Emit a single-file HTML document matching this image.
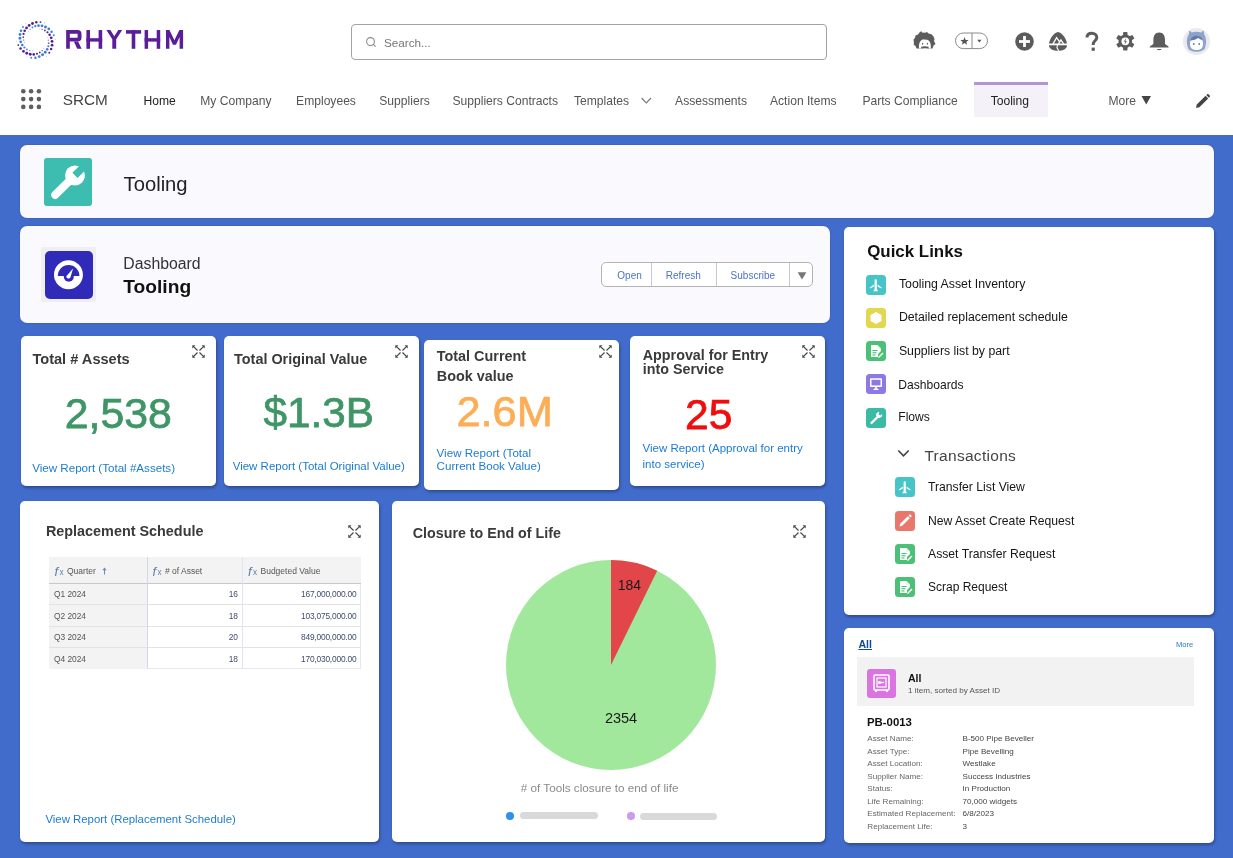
<!DOCTYPE html>
<html><head><meta charset="utf-8"><title>Tooling</title>
<style>
html,body{margin:0;padding:0;}
body{width:1233px;height:858px;overflow:hidden;position:relative;background:#fff;font-family:"Liberation Sans", sans-serif;-webkit-font-smoothing:antialiased;will-change:transform;}
.t{position:absolute;line-height:1;white-space:nowrap;}
.r{position:absolute;box-sizing:border-box;}
svg.r{overflow:visible;}
</style></head><body>
<div class="r" style="left:0px;top:135px;width:1233px;height:723px;background:#416ccc;border-radius:0px;"></div>
<svg class="r" style="left:0px;top:0px;" width="1" height="1" viewBox="0 0 1 1"><circle cx="44.72" cy="22.89" r="0.35" fill="#53209a"/><circle cx="40.46" cy="22.12" r="0.93" fill="#53209a"/><circle cx="36.31" cy="22.34" r="1.24" fill="#53209a"/><circle cx="32.49" cy="23.48" r="1.40" fill="#53209a"/><circle cx="29.19" cy="25.39" r="1.45" fill="#53209a"/><circle cx="26.55" cy="27.90" r="1.40" fill="#53209a"/><circle cx="24.67" cy="30.82" r="1.28" fill="#53209a"/><circle cx="23.59" cy="33.95" r="1.09" fill="#53209a"/><circle cx="23.29" cy="37.07" r="0.86" fill="#53209a"/><circle cx="23.73" cy="40.00" r="0.61" fill="#53209a"/><circle cx="24.79" cy="42.59" r="0.35" fill="#53209a"/><circle cx="16.83" cy="41.00" r="0.35" fill="#53209a"/><circle cx="18.28" cy="45.08" r="0.93" fill="#53209a"/><circle cx="20.55" cy="48.56" r="1.24" fill="#53209a"/><circle cx="23.45" cy="51.30" r="1.40" fill="#53209a"/><circle cx="26.75" cy="53.20" r="1.45" fill="#53209a"/><circle cx="30.25" cy="54.23" r="1.40" fill="#53209a"/><circle cx="33.72" cy="54.40" r="1.28" fill="#53209a"/><circle cx="36.96" cy="53.78" r="1.09" fill="#53209a"/><circle cx="39.81" cy="52.47" r="0.86" fill="#53209a"/><circle cx="42.14" cy="50.63" r="0.61" fill="#53209a"/><circle cx="43.84" cy="48.41" r="0.35" fill="#53209a"/><circle cx="46.46" cy="56.10" r="0.35" fill="#53209a"/><circle cx="49.26" cy="52.80" r="0.93" fill="#53209a"/><circle cx="51.14" cy="49.10" r="1.24" fill="#53209a"/><circle cx="52.06" cy="45.22" r="1.40" fill="#53209a"/><circle cx="52.06" cy="41.40" r="1.45" fill="#53209a"/><circle cx="51.20" cy="37.86" r="1.40" fill="#53209a"/><circle cx="49.61" cy="34.77" r="1.28" fill="#53209a"/><circle cx="47.45" cy="32.28" r="1.09" fill="#53209a"/><circle cx="44.89" cy="30.46" r="0.86" fill="#53209a"/><circle cx="42.14" cy="29.37" r="0.61" fill="#53209a"/><circle cx="39.36" cy="29.00" r="0.35" fill="#53209a"/><circle cx="25.83" cy="23.72" r="0.35" fill="#3c7de0"/><circle cx="22.97" cy="26.97" r="0.93" fill="#3c7de0"/><circle cx="21.02" cy="30.64" r="1.24" fill="#3c7de0"/><circle cx="20.03" cy="34.50" r="1.40" fill="#3c7de0"/><circle cx="19.97" cy="38.32" r="1.45" fill="#3c7de0"/><circle cx="20.76" cy="41.87" r="1.40" fill="#3c7de0"/><circle cx="22.30" cy="44.99" r="1.28" fill="#3c7de0"/><circle cx="24.42" cy="47.52" r="1.09" fill="#3c7de0"/><circle cx="26.94" cy="49.38" r="0.86" fill="#3c7de0"/><circle cx="29.68" cy="50.52" r="0.61" fill="#3c7de0"/><circle cx="32.45" cy="50.94" r="0.35" fill="#3c7de0"/><circle cx="26.99" cy="56.95" r="0.35" fill="#3c7de0"/><circle cx="31.23" cy="57.80" r="0.93" fill="#3c7de0"/><circle cx="35.38" cy="57.65" r="1.24" fill="#3c7de0"/><circle cx="39.22" cy="56.58" r="1.40" fill="#3c7de0"/><circle cx="42.56" cy="54.73" r="1.45" fill="#3c7de0"/><circle cx="45.24" cy="52.26" r="1.40" fill="#3c7de0"/><circle cx="47.17" cy="49.37" r="1.28" fill="#3c7de0"/><circle cx="48.30" cy="46.27" r="1.09" fill="#3c7de0"/><circle cx="48.65" cy="43.15" r="0.86" fill="#3c7de0"/><circle cx="48.27" cy="40.21" r="0.61" fill="#3c7de0"/><circle cx="47.25" cy="37.61" r="0.35" fill="#3c7de0"/><circle cx="55.19" cy="39.33" r="0.35" fill="#3c7de0"/><circle cx="53.80" cy="35.23" r="0.93" fill="#3c7de0"/><circle cx="51.59" cy="31.71" r="1.24" fill="#3c7de0"/><circle cx="48.75" cy="28.92" r="1.40" fill="#3c7de0"/><circle cx="45.48" cy="26.96" r="1.45" fill="#3c7de0"/><circle cx="42.00" cy="25.87" r="1.40" fill="#3c7de0"/><circle cx="38.53" cy="25.64" r="1.28" fill="#3c7de0"/><circle cx="35.28" cy="26.21" r="1.09" fill="#3c7de0"/><circle cx="32.41" cy="27.47" r="0.86" fill="#3c7de0"/><circle cx="30.05" cy="29.27" r="0.61" fill="#3c7de0"/><circle cx="28.30" cy="31.45" r="0.35" fill="#3c7de0"/></svg>
<svg class="r" style="left:0px;top:0px;" width="1" height="1" viewBox="0 0 1 1"><path d="M66.15 48.8 V30.05 H77.5 Q81.5 30.05 81.5 34 V37.7 Q81.5 41.5 77.5 41.5 H69.8 V37.7 H77.6 V33.7 H69.8 V48.8 Z" fill="#5b1e98"/><path d="M73.9 41.5 L78.1 41.5 L81.6 48.8 L77.2 48.8 Z" fill="#5b1e98"/><rect x="86.4" y="30.05" width="3.6" height="18.75" fill="#5b1e98"/><rect x="98.6" y="30.05" width="3.6" height="18.75" fill="#5b1e98"/><rect x="86.4" y="38.2" width="15.8" height="3.4" fill="#5b1e98"/><path d="M106.4 30.05 L110.4 30.05 L114.25 36.2 L118.3 30.05 L122.2 30.05 L116.2 39.3 L116.2 48.8 L112.3 48.8 L112.3 39.3 Z" fill="#5b1e98"/><rect x="126" y="30.1" width="15.1" height="3.6" fill="#5b1e98"/><rect x="131.7" y="30.1" width="3.6" height="18.7" fill="#5b1e98"/><rect x="144.6" y="30.05" width="3.5" height="18.75" fill="#5b1e98"/><rect x="156.7" y="30.05" width="3.5" height="18.75" fill="#5b1e98"/><rect x="144.6" y="38.2" width="15.6" height="3.4" fill="#5b1e98"/><path d="M166 48.8 V30.05 H169.5 L174.4 40.2 L179.4 30.05 H183.1 V48.8 H179.6 V37 L176 44.7 H172.9 L169.4 37 V48.8 Z" fill="#5b1e98"/></svg>
<div class="r" style="left:351px;top:24px;width:476px;height:35.5px;border:1px solid #a3a3a3;border-radius:4px;background:#fff"></div>
<svg class="r" style="left:365px;top:36px;" width="12" height="12" viewBox="0 0 12 12"><circle cx="5.5" cy="5.5" r="3.9" fill="none" stroke="#888" stroke-width="1.05"/><line x1="8.3" y1="8.3" x2="10.6" y2="10.6" stroke="#888" stroke-width="1.1"/></svg>
<div class="t" style="left:384.0px;top:36.7px;font-size:11.7px;color:#777;">Search...</div>
<svg class="r" style="left:908px;top:26px;" width="34" height="28" viewBox="0 0 34 28"><path d="M6 17.5 L5.5 13.5 L7 12 L7.5 9.5 L10 8.5 L11.5 6.5 L13.3 5 L14 6.5 L17 6.8 L19 6 L20.5 7.5 L23.5 8.3 L25.5 10.5 L26.5 13 L26 15 L27.5 18 L25.5 19.5 L24.5 22.5 L8.5 22.5 L7.5 20 L5.5 18.5 Z" fill="#5c5c5c"/><path d="M11 22.6 C10.5 16 13 13.3 16.3 13.3 L17 14 L17.8 13.4 C21.5 13.8 23.3 16.5 22.8 22.6 Z" fill="#fff"/><ellipse cx="14.6" cy="17.8" rx="0.6" ry="0.95" fill="#5c5c5c"/><ellipse cx="19.4" cy="17.8" rx="0.6" ry="0.95" fill="#5c5c5c"/><path d="M13 22.6 L13.3 20.7 C15 20 18.5 20 20.5 20.7 L20.8 22.6 C18 21.8 15.8 21.8 13 22.6 Z" fill="#5c5c5c"/></svg>
<svg class="r" style="left:955px;top:32px;" width="34" height="18" viewBox="0 0 34 18"><rect x="0.5" y="1" width="32" height="15.6" rx="7.8" fill="#fff" stroke="#8a8a8a" stroke-width="1"/><line x1="17" y1="1" x2="17" y2="16.6" stroke="#8a8a8a" stroke-width="1"/><path d="M9.5 5 L10.6 7.9 L13.6 8 L11.3 9.9 L12.1 12.8 L9.5 11.1 L6.9 12.8 L7.7 9.9 L5.4 8 L8.4 7.9 Z" fill="#555"/><path d="M22.3 7.8 L26.5 7.8 L24.4 10.5 Z" fill="#555"/></svg>
<svg class="r" style="left:1015px;top:32px;" width="19" height="19" viewBox="0 0 19 19"><circle cx="9.5" cy="9.5" r="9.3" fill="#5c5c5c"/><rect x="8.1" y="4" width="2.8" height="11" fill="#fff"/><rect x="4" y="8.1" width="11" height="2.8" fill="#fff"/></svg>
<svg class="r" style="left:1044px;top:28px;" width="28" height="26" viewBox="0 0 28 26"><path d="M5 15.6 C6 10 10 4.5 14 4 C18 4.5 22 10 23 15.6 Z" fill="#5c5c5c"/><path d="M9 15.8 L12.6 9.6 L15.6 13.8 M14.5 15.8 L16.9 11.9 L19.6 15.8" fill="none" stroke="#fff" stroke-width="1.3"/><path d="M5 17.3 L23 17.3 C23 21 19 22.8 14 22.8 C9 22.8 5 21 5 17.3 Z" fill="#5c5c5c"/><path d="M13.5 17 L12.9 19.6 L14.8 23" fill="none" stroke="#fff" stroke-width="1.1"/></svg>
<svg class="r" style="left:1085px;top:32px;" width="14" height="20" viewBox="0 0 14 20"><path d="M2 5.5 C2 2.5 4.3 1.2 6.8 1.2 C9.6 1.2 11.8 3 11.8 5.5 C11.8 8.5 8.2 9 8.2 12 L8.2 13" fill="none" stroke="#5c5c5c" stroke-width="3" stroke-linecap="butt"/><rect x="6.6" y="15.6" width="3.2" height="3.2" fill="#5c5c5c"/></svg>
<svg class="r" style="left:1116px;top:32px;" width="19" height="19" viewBox="0 0 19 19"><rect x="7.1" y="0" width="4.4" height="5" rx="0.8" fill="#5c5c5c" transform="rotate(0 9.3 9.3)"/><rect x="7.1" y="0" width="4.4" height="5" rx="0.8" fill="#5c5c5c" transform="rotate(60 9.3 9.3)"/><rect x="7.1" y="0" width="4.4" height="5" rx="0.8" fill="#5c5c5c" transform="rotate(120 9.3 9.3)"/><rect x="7.1" y="0" width="4.4" height="5" rx="0.8" fill="#5c5c5c" transform="rotate(180 9.3 9.3)"/><rect x="7.1" y="0" width="4.4" height="5" rx="0.8" fill="#5c5c5c" transform="rotate(240 9.3 9.3)"/><rect x="7.1" y="0" width="4.4" height="5" rx="0.8" fill="#5c5c5c" transform="rotate(300 9.3 9.3)"/><circle cx="9.3" cy="9.3" r="6.8" fill="#5c5c5c"/><circle cx="9.3" cy="9.3" r="3.9" fill="#fff"/><path d="M10 6.3 L7.8 9.6 L9.3 9.6 L8.6 12.4 L10.9 9 L9.4 9 Z" fill="#5c5c5c"/></svg>
<svg class="r" style="left:1149px;top:32px;" width="21" height="20" viewBox="0 0 21 20"><path d="M10.2 0.5 C14.5 0.5 16 4 16 8 L16 11.5 C16 12.5 18.5 13.5 19.5 14.5 L19.5 15.5 L0.8 15.5 L0.8 14.5 C2 13.5 4.4 12.5 4.4 11.5 L4.4 8 C4.4 4 6 0.5 10.2 0.5 Z" fill="#5c5c5c"/><path d="M7.8 17 L12.6 17 C12 18.6 8.4 18.6 7.8 17 Z" fill="#5c5c5c"/></svg>
<svg class="r" style="left:1183px;top:28px;" width="27" height="27" viewBox="0 0 27 27"><circle cx="13.5" cy="13.5" r="13.5" fill="#e9e9ee"/><path d="M5 20 C3 14 4 9 6 6 L6 3.5 C6.5 2.5 8 3 8.5 4.5 C11.5 3.5 15.5 3.5 18.5 4.5 C19 3 20.5 2.5 21 3.5 L21 6 C23 9 24 14 22 20 C20 25 7 25 5 20 Z" fill="#8ea3c9"/><path d="M7 16 C7 11 9 8.5 13.5 8.5 C18 8.5 20 11 20 16 C20 20.5 17 22 13.5 22 C10 22 7 20.5 7 16 Z" fill="#fff"/><path d="M7 12.5 C8 9 11 7.5 14 7.8 C17 8 19.5 10 20 12.5 C18 11.5 16 11 15 9.8 C14 11.5 10 12.5 7 12.5 Z" fill="#5f7bb0"/><circle cx="10.8" cy="16" r="0.9" fill="#5f7bb0"/><circle cx="16.2" cy="16" r="0.9" fill="#5f7bb0"/></svg>
<svg class="r" style="left:20.5px;top:89px;" width="21" height="21" viewBox="0 0 21 21"><circle cx="2.3" cy="2.3" r="2.3" fill="#5e5e5e"/><circle cx="10.1" cy="2.3" r="2.3" fill="#5e5e5e"/><circle cx="17.9" cy="2.3" r="2.3" fill="#5e5e5e"/><circle cx="2.3" cy="10.1" r="2.3" fill="#5e5e5e"/><circle cx="10.1" cy="10.1" r="2.3" fill="#5e5e5e"/><circle cx="17.9" cy="10.1" r="2.3" fill="#5e5e5e"/><circle cx="2.3" cy="17.9" r="2.3" fill="#5e5e5e"/><circle cx="10.1" cy="17.9" r="2.3" fill="#5e5e5e"/><circle cx="17.9" cy="17.9" r="2.3" fill="#5e5e5e"/></svg>
<div class="t" style="left:62.8px;top:92.0px;font-size:15.3px;color:#444;">SRCM</div>
<div class="r" style="left:974px;top:82px;width:74px;height:35px;background:#f4f1f8;border-radius:0px;"></div>
<div class="r" style="left:974px;top:82px;width:74px;height:3px;background:#b594d2;border-radius:0px;"></div>
<div class="t" style="left:143.5px;top:94.6px;font-size:12.1px;color:#222;">Home</div>
<div class="t" style="left:200.2px;top:94.6px;font-size:12.1px;color:#555;">My Company</div>
<div class="t" style="left:296.1px;top:94.6px;font-size:12.1px;color:#555;">Employees</div>
<div class="t" style="left:379.3px;top:94.6px;font-size:12.1px;color:#555;">Suppliers</div>
<div class="t" style="left:452.5px;top:94.6px;font-size:12.1px;color:#555;">Suppliers Contracts</div>
<div class="t" style="left:573.9px;top:94.6px;font-size:12.1px;color:#555;">Templates</div>
<div class="t" style="left:675.1px;top:94.6px;font-size:12.1px;color:#555;">Assessments</div>
<div class="t" style="left:770.0px;top:94.6px;font-size:12.1px;color:#555;">Action Items</div>
<div class="t" style="left:862.4px;top:94.6px;font-size:12.1px;color:#555;">Parts Compliance</div>
<div class="t" style="left:990.7px;top:94.6px;font-size:12.1px;color:#222;">Tooling</div>
<div class="t" style="left:1108.4px;top:94.6px;font-size:12.1px;color:#555;">More</div>
<svg class="r" style="left:641px;top:97px;" width="11" height="8" viewBox="0 0 11 8"><path d="M0.6 1 L5.3 6 L10 1" fill="none" stroke="#777" stroke-width="1.1"/></svg>
<svg class="r" style="left:1141px;top:95px;" width="11" height="10" viewBox="0 0 11 10"><path d="M0.5 1 L10 1 L5.25 9.5 Z" fill="#444"/></svg>
<svg class="r" style="left:1195px;top:94px;" width="16" height="15" viewBox="0 0 16 15"><path d="M1 14 L1.8 10.6 L10.6 1.8 L13.2 4.4 L4.4 13.2 Z" fill="#444"/><path d="M11.3 1.1 L12.2 0.2 C12.6 -0.1 13.1 -0.1 13.5 0.2 L14.8 1.5 C15.1 1.9 15.1 2.4 14.8 2.8 L13.9 3.7 Z" fill="#444"/></svg>
<div class="r" style="left:20px;top:145px;width:1194px;height:73px;background:#f9f9fe;border-radius:7px;box-shadow:0 0 1.5px rgba(0,0,40,0.35);"></div>
<div class="r" style="left:44px;top:158px;width:48px;height:48px;background:#3dbcb0;border-radius:3px;"></div>
<svg class="r" style="left:44px;top:158px;" width="48" height="48" viewBox="0 0 48 48"><path d="M11.2 36.9 L29 19.4" stroke="#fff" stroke-width="8" stroke-linecap="round"/><circle cx="31" cy="17.4" r="10" fill="#fff"/><rect x="31" y="13.7" width="14" height="7.4" fill="#3dbcb0" transform="rotate(-45 31 17.4)"/></svg>
<div class="t" style="left:123.6px;top:173.8px;font-size:20.2px;color:#222;">Tooling</div>
<div class="r" style="left:20px;top:226px;width:810px;height:97px;background:#f9f9fe;border-radius:7px;box-shadow:0 0 1.5px rgba(0,0,40,0.35);"></div>
<div class="r" style="left:41px;top:247px;width:55px;height:55px;background:#eeeef3;border-radius:2px;"></div>
<div class="r" style="left:45px;top:251px;width:48px;height:48px;background:#2f2ab8;border-radius:5px;"></div>
<svg class="r" style="left:45px;top:251px;" width="48" height="48" viewBox="0 0 48 48"><circle cx="23.45" cy="23.7" r="14.45" fill="#fff"/><path d="M12.8 24.9 A10.8 10.8 0 0 1 34.4 24.9 Z" fill="#2f2ab8"/><circle cx="23.8" cy="25.8" r="5" fill="#2f2ab8"/><path d="M21.3 25.2 L28.1 17.4 L25.4 26.4 A2.2 2.2 0 0 1 21.3 25.2 Z" fill="#fff"/></svg>
<div class="t" style="left:123.3px;top:255.8px;font-size:15.8px;color:#333;">Dashboard</div>
<div class="t" style="left:123.3px;top:276.9px;font-size:19.2px;color:#111;font-weight:bold;">Tooling</div>
<div class="r" style="left:601px;top:262px;width:212px;height:25px;border:1px solid #b3b3b3;border-radius:5px;background:#fff"></div>
<div class="r" style="left:651px;top:263px;width:1px;height:23px;background:#c8c8c8;border-radius:0px;"></div>
<div class="r" style="left:716px;top:263px;width:1px;height:23px;background:#c8c8c8;border-radius:0px;"></div>
<div class="r" style="left:789px;top:263px;width:1px;height:23px;background:#c8c8c8;border-radius:0px;"></div>
<div class="t" style="left:617.3px;top:270.8px;font-size:10px;color:#4d72c9;">Open</div>
<div class="t" style="left:665.8px;top:270.8px;font-size:10px;color:#4d72c9;">Refresh</div>
<div class="t" style="left:730.6px;top:270.8px;font-size:10px;color:#4d72c9;">Subscribe</div>
<svg class="r" style="left:796.5px;top:272px;" width="11" height="9" viewBox="0 0 11 9"><path d="M0.6 0.3 L9.4 0.3 L5 7.6 Z" fill="#777"/></svg>
<div class="r" style="left:21px;top:336px;width:195px;height:150px;background:#fff;border-radius:5px;box-shadow:1px 2px 3px rgba(0,0,0,0.3);"></div>
<div class="t" style="left:32.4px;top:351.5px;font-size:14.6px;color:#3a3a3a;font-weight:bold;">Total # Assets</div>
<div class="t" style="left:64.8px;top:392.1px;font-size:42.8px;color:#3f9566;-webkit-text-stroke:0.75px #3f9566;">2,538</div>
<div class="t" style="left:32.2px;top:462.3px;font-size:11.6px;color:#1b7bd3;">View Report (Total #Assets)</div>
<svg class="r" style="left:192px;top:345px;" width="13" height="13" viewBox="0 0 12.5 12.5"><g stroke="#454545" stroke-width="1.1"><line x1="1.5" y1="1.5" x2="5.3" y2="5.3"/><line x1="11" y1="1.5" x2="7.2" y2="5.3"/><line x1="1.5" y1="11" x2="5.3" y2="7.2"/><line x1="11" y1="11" x2="7.2" y2="7.2"/></g><g fill="#454545"><path d="M0.3 0.3 L3.3 0.3 L0.3 3.3 Z"/><path d="M12.2 0.3 L9.2 0.3 L12.2 3.3 Z"/><path d="M0.3 12.2 L3.3 12.2 L0.3 9.2 Z"/><path d="M12.2 12.2 L9.2 12.2 L12.2 9.2 Z"/></g></svg>
<div class="r" style="left:224px;top:336px;width:195px;height:150px;background:#fff;border-radius:5px;box-shadow:1px 2px 3px rgba(0,0,0,0.3);"></div>
<div class="t" style="left:234.1px;top:352.2px;font-size:14.4px;color:#3a3a3a;font-weight:bold;">Total Original Value</div>
<div class="t" style="left:263.6px;top:391.6px;font-size:42.2px;color:#3f9566;-webkit-text-stroke:0.75px #3f9566;">$1.3B</div>
<div class="t" style="left:232.7px;top:460.9px;font-size:11.5px;color:#1b7bd3;">View Report (Total Original Value)</div>
<svg class="r" style="left:395px;top:345px;" width="13" height="13" viewBox="0 0 12.5 12.5"><g stroke="#454545" stroke-width="1.1"><line x1="1.5" y1="1.5" x2="5.3" y2="5.3"/><line x1="11" y1="1.5" x2="7.2" y2="5.3"/><line x1="1.5" y1="11" x2="5.3" y2="7.2"/><line x1="11" y1="11" x2="7.2" y2="7.2"/></g><g fill="#454545"><path d="M0.3 0.3 L3.3 0.3 L0.3 3.3 Z"/><path d="M12.2 0.3 L9.2 0.3 L12.2 3.3 Z"/><path d="M0.3 12.2 L3.3 12.2 L0.3 9.2 Z"/><path d="M12.2 12.2 L9.2 12.2 L12.2 9.2 Z"/></g></svg>
<div class="r" style="left:424px;top:340px;width:195px;height:150px;background:#fff;border-radius:5px;box-shadow:1px 2px 3px rgba(0,0,0,0.3);"></div>
<div class="t" style="left:436.8px;top:349.3px;font-size:14.4px;color:#3a3a3a;font-weight:bold;">Total Current</div>
<div class="t" style="left:436.8px;top:369.4px;font-size:14.4px;color:#3a3a3a;font-weight:bold;">Book value</div>
<div class="t" style="left:456.4px;top:390.1px;font-size:43.4px;color:#fcae57;-webkit-text-stroke:0.75px #fcae57;">2.6M</div>
<div class="t" style="left:436.6px;top:446.8px;font-size:11.6px;color:#1b7bd3;">View Report (Total</div>
<div class="t" style="left:436.6px;top:459.9px;font-size:11.6px;color:#1b7bd3;">Current Book Value)</div>
<svg class="r" style="left:599px;top:345.3px;" width="13" height="13" viewBox="0 0 12.5 12.5"><g stroke="#454545" stroke-width="1.1"><line x1="1.5" y1="1.5" x2="5.3" y2="5.3"/><line x1="11" y1="1.5" x2="7.2" y2="5.3"/><line x1="1.5" y1="11" x2="5.3" y2="7.2"/><line x1="11" y1="11" x2="7.2" y2="7.2"/></g><g fill="#454545"><path d="M0.3 0.3 L3.3 0.3 L0.3 3.3 Z"/><path d="M12.2 0.3 L9.2 0.3 L12.2 3.3 Z"/><path d="M0.3 12.2 L3.3 12.2 L0.3 9.2 Z"/><path d="M12.2 12.2 L9.2 12.2 L12.2 9.2 Z"/></g></svg>
<div class="r" style="left:630px;top:336px;width:195px;height:150px;background:#fff;border-radius:5px;box-shadow:1px 2px 3px rgba(0,0,0,0.3);"></div>
<div class="t" style="left:642.8px;top:347.6px;font-size:14.3px;color:#3a3a3a;font-weight:bold;">Approval for Entry</div>
<div class="t" style="left:642.8px;top:361.9px;font-size:14.3px;color:#3a3a3a;font-weight:bold;">into Service</div>
<div class="t" style="left:685.0px;top:392.9px;font-size:42.6px;color:#f00d0d;-webkit-text-stroke:0.75px #f00d0d;">25</div>
<div class="t" style="left:642.5px;top:442.7px;font-size:11.5px;color:#1b7bd3;">View Report (Approval for entry</div>
<div class="t" style="left:642.5px;top:459.1px;font-size:11.5px;color:#1b7bd3;">into service)</div>
<svg class="r" style="left:802px;top:345px;" width="13" height="13" viewBox="0 0 12.5 12.5"><g stroke="#454545" stroke-width="1.1"><line x1="1.5" y1="1.5" x2="5.3" y2="5.3"/><line x1="11" y1="1.5" x2="7.2" y2="5.3"/><line x1="1.5" y1="11" x2="5.3" y2="7.2"/><line x1="11" y1="11" x2="7.2" y2="7.2"/></g><g fill="#454545"><path d="M0.3 0.3 L3.3 0.3 L0.3 3.3 Z"/><path d="M12.2 0.3 L9.2 0.3 L12.2 3.3 Z"/><path d="M0.3 12.2 L3.3 12.2 L0.3 9.2 Z"/><path d="M12.2 12.2 L9.2 12.2 L12.2 9.2 Z"/></g></svg>
<div class="r" style="left:20px;top:501px;width:359px;height:341px;background:#fff;border-radius:5px;box-shadow:1px 2px 3px rgba(0,0,0,0.3);"></div>
<div class="t" style="left:45.9px;top:524.4px;font-size:14.4px;color:#3a3a3a;font-weight:bold;">Replacement Schedule</div>
<svg class="r" style="left:348px;top:525px;" width="13" height="13" viewBox="0 0 12.5 12.5"><g stroke="#454545" stroke-width="1.1"><line x1="1.5" y1="1.5" x2="5.3" y2="5.3"/><line x1="11" y1="1.5" x2="7.2" y2="5.3"/><line x1="1.5" y1="11" x2="5.3" y2="7.2"/><line x1="11" y1="11" x2="7.2" y2="7.2"/></g><g fill="#454545"><path d="M0.3 0.3 L3.3 0.3 L0.3 3.3 Z"/><path d="M12.2 0.3 L9.2 0.3 L12.2 3.3 Z"/><path d="M0.3 12.2 L3.3 12.2 L0.3 9.2 Z"/><path d="M12.2 12.2 L9.2 12.2 L12.2 9.2 Z"/></g></svg>
<div class="r" style="left:49px;top:557px;width:312px;height:112px;background:#fff;border:1px solid #e6e8ec;box-sizing:border-box"></div>
<div class="r" style="left:49px;top:557px;width:312px;height:26px;background:#f3f3f3;border-radius:0px;"></div>
<div class="r" style="left:49px;top:583px;width:98px;height:86px;background:#f3f3f3;border-radius:0px;"></div>
<div class="r" style="left:49px;top:583px;width:312px;height:1px;background:#c9c9c9;border-radius:0px;"></div>
<div class="r" style="left:49px;top:604px;width:312px;height:1px;background:#e2e2e2;border-radius:0px;"></div>
<div class="r" style="left:49px;top:626px;width:312px;height:1px;background:#e2e2e2;border-radius:0px;"></div>
<div class="r" style="left:49px;top:647px;width:312px;height:1px;background:#e2e2e2;border-radius:0px;"></div>
<div class="r" style="left:147px;top:557px;width:1px;height:112px;background:#d3dae6;border-radius:0px;"></div>
<div class="r" style="left:242px;top:557px;width:1px;height:112px;background:#dfe5ee;border-radius:0px;"></div>
<div class="t" style="left:54.5px;top:564.5px;font-size:13px;color:#5d7fb0;font-family:"Liberation Serif",serif;"><i>f</i></div>
<div class="t" style="left:59.6px;top:569.1px;font-size:8.2px;color:#5d7fb0;">x</div>
<div class="t" style="left:67.0px;top:566.7px;font-size:8.5px;color:#555;">Quarter</div>
<div class="t" style="left:152.4px;top:564.5px;font-size:13px;color:#5d7fb0;font-family:"Liberation Serif",serif;"><i>f</i></div>
<div class="t" style="left:157.5px;top:569.1px;font-size:8.2px;color:#5d7fb0;">x</div>
<div class="t" style="left:164.9px;top:566.7px;font-size:8.5px;color:#555;"># of Asset</div>
<div class="t" style="left:248.0px;top:564.5px;font-size:13px;color:#5d7fb0;font-family:"Liberation Serif",serif;"><i>f</i></div>
<div class="t" style="left:253.1px;top:569.1px;font-size:8.2px;color:#5d7fb0;">x</div>
<div class="t" style="left:260.5px;top:566.7px;font-size:8.5px;color:#555;">Budgeted Value</div>
<svg class="r" style="left:101.5px;top:567px;" width="5" height="8" viewBox="0 0 5 8"><path d="M2.5 0.5 L4.6 3.3 L3 3.3 L3 7.5 L2 7.5 L2 3.3 L0.4 3.3 Z" fill="#6b8bbd"/></svg>
<div class="t" style="left:53.9px;top:590.4px;font-size:8.4px;color:#555;">Q1 2024</div>
<div class="t" style="right:995px;top:590.4px;font-size:8.4px;color:#3f4d6b">16</div>
<div class="t" style="right:876.6px;top:590.4px;font-size:8.4px;color:#3f4d6b;letter-spacing:-0.2px">167,000,000.00</div>
<div class="t" style="left:53.9px;top:611.9px;font-size:8.4px;color:#555;">Q2 2024</div>
<div class="t" style="right:995px;top:611.9px;font-size:8.4px;color:#3f4d6b">18</div>
<div class="t" style="right:876.6px;top:611.9px;font-size:8.4px;color:#3f4d6b;letter-spacing:-0.2px">103,075,000.00</div>
<div class="t" style="left:53.9px;top:633.4px;font-size:8.4px;color:#555;">Q3 2024</div>
<div class="t" style="right:995px;top:633.4px;font-size:8.4px;color:#3f4d6b">20</div>
<div class="t" style="right:876.6px;top:633.4px;font-size:8.4px;color:#3f4d6b;letter-spacing:-0.2px">849,000,000.00</div>
<div class="t" style="left:53.9px;top:654.9px;font-size:8.4px;color:#555;">Q4 2024</div>
<div class="t" style="right:995px;top:654.9px;font-size:8.4px;color:#3f4d6b">18</div>
<div class="t" style="right:876.6px;top:654.9px;font-size:8.4px;color:#3f4d6b;letter-spacing:-0.2px">170,030,000.00</div>
<div class="t" style="left:45.4px;top:813.7px;font-size:11.4px;color:#1b7bd3;">View Report (Replacement Schedule)</div>
<div class="r" style="left:392px;top:501px;width:433px;height:341px;background:#fff;border-radius:5px;box-shadow:1px 2px 3px rgba(0,0,0,0.3);"></div>
<div class="t" style="left:412.8px;top:525.8px;font-size:14.25px;color:#3a3a3a;font-weight:bold;">Closure to End of Life</div>
<svg class="r" style="left:793px;top:525px;" width="13" height="13" viewBox="0 0 12.5 12.5"><g stroke="#454545" stroke-width="1.1"><line x1="1.5" y1="1.5" x2="5.3" y2="5.3"/><line x1="11" y1="1.5" x2="7.2" y2="5.3"/><line x1="1.5" y1="11" x2="5.3" y2="7.2"/><line x1="11" y1="11" x2="7.2" y2="7.2"/></g><g fill="#454545"><path d="M0.3 0.3 L3.3 0.3 L0.3 3.3 Z"/><path d="M12.2 0.3 L9.2 0.3 L12.2 3.3 Z"/><path d="M0.3 12.2 L3.3 12.2 L0.3 9.2 Z"/><path d="M12.2 12.2 L9.2 12.2 L12.2 9.2 Z"/></g></svg>
<svg class="r" style="left:0px;top:0px;pointer-events:none" width="1233" height="858" viewBox="0 0 1233 858"><circle cx="611" cy="665" r="105" fill="#a2e89c"/><path d="M611 665 L611 560 A105 105 0 0 1 657.19 570.71 Z" fill="#e2464b"/></svg>
<div class="t" style="left:617.8px;top:578.3px;font-size:14px;color:#1a1a1a;">184</div>
<div class="t" style="left:604.9px;top:711.4px;font-size:14.5px;color:#1a1a1a;">2354</div>
<div class="t" style="left:520.8px;top:781.9px;font-size:11.7px;color:#8a8a8a;"># of Tools closure to end of life</div>
<div class="r" style="left:506px;top:811.5px;width:8px;height:8.0px;background:#2e8ff0;border-radius:4px;"></div>
<div class="r" style="left:520px;top:812px;width:78px;height:7px;background:#d9d9d9;border-radius:3.5px;"></div>
<div class="r" style="left:627px;top:811.5px;width:8px;height:8.0px;background:#c79cf1;border-radius:4px;"></div>
<div class="r" style="left:640px;top:813px;width:77px;height:7px;background:#d9d9d9;border-radius:3.5px;"></div>
<div class="r" style="left:844px;top:227px;width:370px;height:388px;background:#fff;border-radius:5px;box-shadow:1px 2px 3px rgba(0,0,0,0.3);"></div>
<div class="t" style="left:867.2px;top:243.5px;font-size:16.9px;color:#111;font-weight:bold;">Quick Links</div>
<div class="r" style="left:866px;top:274.7px;width:20px;height:20.0px;background:#47c4c8;border-radius:3.5px;"></div>
<svg class="r" style="left:866px;top:274.7px;" width="20" height="20" viewBox="0 0 20 20"><path d="M9.7 4.2 C10.4 4.2 10.8 4.8 10.8 5.5 L10.8 14.3 L12.2 16.3 L7.2 16.3 L8.6 14.3 L8.6 5.5 C8.6 4.8 9 4.2 9.7 4.2 Z" fill="#fff"/><path d="M7.8 9.6 L7.8 11.5 L4.6 13.3 C3.9 13.5 3.5 13 3.9 12.6 Z" fill="#fff"/><path d="M11.6 9.6 L11.6 11.5 L14.8 13.3 C15.5 13.5 15.9 13 15.5 12.6 Z" fill="#fff"/></svg>
<div class="t" style="left:898.9px;top:278.3px;font-size:12.3px;color:#161616;">Tooling Asset Inventory</div>
<div class="r" style="left:866px;top:308px;width:20px;height:20px;background:#e3d74f;border-radius:3.5px;"></div>
<svg class="r" style="left:866px;top:308px;" width="20" height="20" viewBox="0 0 20 20"><path d="M10 4 L15.5 7 L15.5 13 L10 16 L4.5 13 L4.5 7 Z" fill="#fff"/></svg>
<div class="t" style="left:898.9px;top:310.8px;font-size:12.3px;color:#161616;">Detailed replacement schedule</div>
<div class="r" style="left:866px;top:341px;width:20px;height:20px;background:#4bc076;border-radius:3.5px;"></div>
<svg class="r" style="left:866px;top:341px;" width="20" height="20" viewBox="0 0 20 20"><path d="M5 4 L11.5 4 L15 7.5 L15 10 L12 13 L12 16 L5 16 Z" fill="#fff"/><path d="M11.5 4 L11.5 7.5 L15 7.5" fill="#d8f2e0"/><rect x="6.5" y="9" width="5" height="1.1" fill="#4bc076"/><rect x="6.5" y="11.2" width="4" height="1.1" fill="#4bc076"/><rect x="6.5" y="13.4" width="3" height="1.1" fill="#4bc076"/><path d="M12.5 15.5 L16.5 11.5 L17.5 12.5 L13.5 16.5 L12 17 Z" fill="#fff"/></svg>
<div class="t" style="left:898.9px;top:344.6px;font-size:12.3px;color:#161616;">Suppliers list by part</div>
<div class="r" style="left:866px;top:374px;width:20px;height:20px;background:#8c79e6;border-radius:3.5px;"></div>
<svg class="r" style="left:866px;top:374px;" width="20" height="20" viewBox="0 0 20 20"><rect x="4" y="4.3" width="12" height="8.6" rx="1" fill="#fff"/><rect x="5.5" y="5.8" width="9" height="5.6" fill="#8c79e6"/><rect x="9.2" y="12.9" width="1.6" height="1.6" fill="#fff"/><path d="M7.3 16 C7.5 14.8 8.5 14.3 10 14.3 C11.5 14.3 12.5 14.8 12.7 16 Z" fill="#fff"/></svg>
<div class="t" style="left:898.3px;top:378.5px;font-size:12.1px;color:#161616;">Dashboards</div>
<div class="r" style="left:866px;top:407.5px;width:20px;height:20.0px;background:#3bbaa6;border-radius:3.5px;"></div>
<svg class="r" style="left:866px;top:407.5px;" width="20" height="20" viewBox="0 0 20 20"><path d="M5.5 15 L11.5 9" stroke="#fff" stroke-width="2.4" stroke-linecap="round"/><path d="M13.5 4 C11.5 3.6 9.8 5.3 10.1 7.3 C10.3 9 12 10.3 13.9 9.8 C15.6 9.4 16.5 7.7 16.1 6 L14.5 7.5 L12.7 6.4 L13.1 4.6 Z" fill="#fff"/></svg>
<div class="t" style="left:898.3px;top:410.8px;font-size:12.1px;color:#161616;">Flows</div>
<svg class="r" style="left:897px;top:449px;" width="13" height="9" viewBox="0 0 13 9"><path d="M1.3 1.5 L6.5 6.8 L11.7 1.5" fill="none" stroke="#444" stroke-width="1.7"/></svg>
<div class="t" style="left:924.4px;top:447.9px;font-size:15.5px;color:#444;letter-spacing:0.3px;">Transactions</div>
<div class="r" style="left:895px;top:477.3px;width:20px;height:20.0px;background:#47c4c8;border-radius:3.5px;"></div>
<svg class="r" style="left:895px;top:477.3px;" width="20" height="20" viewBox="0 0 20 20"><path d="M9.7 4.2 C10.4 4.2 10.8 4.8 10.8 5.5 L10.8 14.3 L12.2 16.3 L7.2 16.3 L8.6 14.3 L8.6 5.5 C8.6 4.8 9 4.2 9.7 4.2 Z" fill="#fff"/><path d="M7.8 9.6 L7.8 11.5 L4.6 13.3 C3.9 13.5 3.5 13 3.9 12.6 Z" fill="#fff"/><path d="M11.6 9.6 L11.6 11.5 L14.8 13.3 C15.5 13.5 15.9 13 15.5 12.6 Z" fill="#fff"/></svg>
<div class="t" style="left:928.0px;top:480.8px;font-size:12.2px;color:#161616;">Transfer List View</div>
<div class="r" style="left:895px;top:510.6px;width:20px;height:20.0px;background:#e8786b;border-radius:3.5px;"></div>
<svg class="r" style="left:895px;top:510.6px;" width="20" height="20" viewBox="0 0 20 20"><path d="M4.5 15.5 L5.2 12.8 L12.8 5.2 L14.8 7.2 L7.2 14.8 Z" fill="#fff"/><path d="M13.6 4.4 L14.3 3.7 C14.7 3.3 15.2 3.3 15.6 3.7 L16.3 4.4 C16.7 4.8 16.7 5.3 16.3 5.7 L15.6 6.4 Z" fill="#fff"/></svg>
<div class="t" style="left:928.0px;top:514.9px;font-size:12.2px;color:#161616;">New Asset Create Request</div>
<div class="r" style="left:895px;top:543.8px;width:20px;height:20.0px;background:#4bc076;border-radius:3.5px;"></div>
<svg class="r" style="left:895px;top:543.8px;" width="20" height="20" viewBox="0 0 20 20"><path d="M5 4 L11.5 4 L15 7.5 L15 10 L12 13 L12 16 L5 16 Z" fill="#fff"/><path d="M11.5 4 L11.5 7.5 L15 7.5" fill="#d8f2e0"/><rect x="6.5" y="9" width="5" height="1.1" fill="#4bc076"/><rect x="6.5" y="11.2" width="4" height="1.1" fill="#4bc076"/><rect x="6.5" y="13.4" width="3" height="1.1" fill="#4bc076"/><path d="M12.5 15.5 L16.5 11.5 L17.5 12.5 L13.5 16.5 L12 17 Z" fill="#fff"/></svg>
<div class="t" style="left:928.0px;top:548.1px;font-size:12.2px;color:#161616;">Asset Transfer Request</div>
<div class="r" style="left:895px;top:577px;width:20px;height:20px;background:#4bc076;border-radius:3.5px;"></div>
<svg class="r" style="left:895px;top:577px;" width="20" height="20" viewBox="0 0 20 20"><path d="M5 4 L11.5 4 L15 7.5 L15 10 L12 13 L12 16 L5 16 Z" fill="#fff"/><path d="M11.5 4 L11.5 7.5 L15 7.5" fill="#d8f2e0"/><rect x="6.5" y="9" width="5" height="1.1" fill="#4bc076"/><rect x="6.5" y="11.2" width="4" height="1.1" fill="#4bc076"/><rect x="6.5" y="13.4" width="3" height="1.1" fill="#4bc076"/><path d="M12.5 15.5 L16.5 11.5 L17.5 12.5 L13.5 16.5 L12 17 Z" fill="#fff"/></svg>
<div class="t" style="left:928.0px;top:580.6px;font-size:12px;color:#161616;">Scrap Request</div>
<div class="r" style="left:844px;top:628px;width:370px;height:215px;background:#fff;border-radius:5px;box-shadow:1px 2px 3px rgba(0,0,0,0.3);"></div>
<div class="t" style="left:858.4px;top:639.2px;font-size:10.6px;color:#0b4b91;font-weight:bold;text-decoration:underline;">All</div>
<div class="t" style="left:1175.9px;top:640.6px;font-size:7.6px;color:#1b7bd3;">More</div>
<div class="r" style="left:857px;top:657px;width:337px;height:49px;background:#f2f2f2;border-radius:0px;"></div>
<div class="r" style="left:867px;top:669px;width:29px;height:29px;background:#d974e0;border-radius:3px;"></div>
<svg class="r" style="left:867px;top:669px;" width="29" height="29" viewBox="0 0 29 29"><rect x="7" y="6" width="15" height="15" rx="1" fill="none" stroke="#fff" stroke-width="1.6"/><rect x="10" y="9" width="9" height="9" fill="none" stroke="#fff" stroke-width="1.2"/><circle cx="12.5" cy="13.5" r="1.6" fill="#fff"/><rect x="12.5" y="12.8" width="4.5" height="1.4" fill="#fff"/><rect x="8" y="21" width="2" height="2" fill="#fff"/><rect x="19" y="21" width="2" height="2" fill="#fff"/></svg>
<div class="t" style="left:907.9px;top:672.9px;font-size:10.6px;color:#111;font-weight:bold;">All</div>
<div class="t" style="left:907.9px;top:687.1px;font-size:8.1px;color:#555;">1 item, sorted by Asset ID</div>
<div class="t" style="left:867.0px;top:717.3px;font-size:11.4px;color:#111;font-weight:bold;">PB-0013</div>
<div class="t" style="left:867.3px;top:735.3px;font-size:8.1px;color:#666;">Asset Name:</div>
<div class="t" style="left:962.5px;top:735.3px;font-size:8.1px;color:#444;">B-500 Pipe Beveller</div>
<div class="t" style="left:867.3px;top:747.9px;font-size:8.1px;color:#666;">Asset Type:</div>
<div class="t" style="left:962.5px;top:747.9px;font-size:8.1px;color:#444;">Pipe Bevelling</div>
<div class="t" style="left:867.3px;top:760.4px;font-size:8.1px;color:#666;">Asset Location:</div>
<div class="t" style="left:962.5px;top:760.4px;font-size:8.1px;color:#444;">Westlake</div>
<div class="t" style="left:867.3px;top:772.9px;font-size:8.1px;color:#666;">Supplier Name:</div>
<div class="t" style="left:962.5px;top:772.9px;font-size:8.1px;color:#444;">Success Industries</div>
<div class="t" style="left:867.3px;top:785.4px;font-size:8.1px;color:#666;">Status:</div>
<div class="t" style="left:962.5px;top:785.4px;font-size:8.1px;color:#444;">In Production</div>
<div class="t" style="left:867.3px;top:797.9px;font-size:8.1px;color:#666;">Life Remaining:</div>
<div class="t" style="left:962.5px;top:797.9px;font-size:8.1px;color:#444;">70,000 widgets</div>
<div class="t" style="left:867.3px;top:810.4px;font-size:8.1px;color:#666;">Estimated Replacement:</div>
<div class="t" style="left:962.5px;top:810.4px;font-size:8.1px;color:#444;">6/8/2023</div>
<div class="t" style="left:867.3px;top:822.9px;font-size:8.1px;color:#666;">Replacement Life:</div>
<div class="t" style="left:962.5px;top:822.9px;font-size:8.1px;color:#444;">3</div>
</body></html>
